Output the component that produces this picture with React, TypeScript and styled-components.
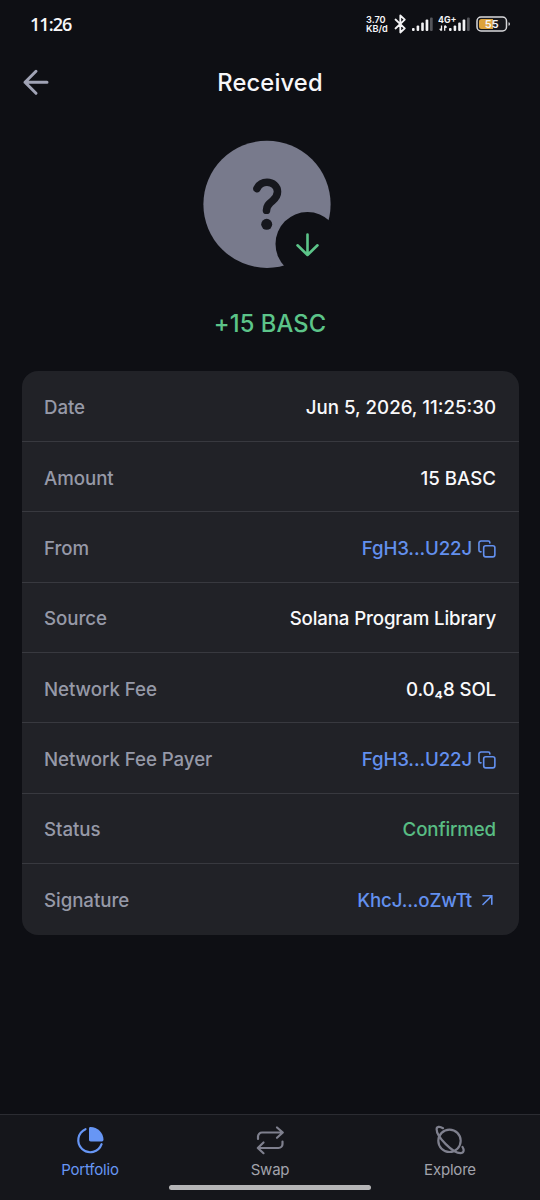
import React from 'react';
import styled, { createGlobalStyle } from 'styled-components';

const Global = createGlobalStyle`
  *, *::before, *::after { box-sizing: border-box; }
  body { margin: 0; background: #0e0f14; }
`;

const Screen = styled.div`
  width: 540px;
  height: 1200px;
  display: flex;
  flex-direction: column;
  overflow: hidden;
  background: #0e0f14;
  color: #f7f7fa;
  font-family: Inter, 'Liberation Sans', sans-serif;
  svg { display: block; flex: none; }
`;

const StatusBar = styled.header`
  height: 48px;
  flex: none;
  display: flex;
  align-items: center;
  justify-content: space-between;
  padding: 0 29px 0 30px;
`;

const Clock = styled.time`
  font-family: 'Open Sans', sans-serif;
  font-size: 18px;
  font-weight: 600;
  letter-spacing: -0.95px;
  line-height: 24px;
`;

const StatusIcons = styled.div`
  display: flex;
  align-items: center;
  height: 24px;
`;

const Speed = styled.div`
  display: flex;
  flex-direction: column;
  gap: 1px;
  width: 24px;
  margin-right: 4px;
  white-space: nowrap;
  font-size: 9.2px;
  font-weight: 600;
  line-height: 8px;
`;

const SpeedLine = styled.span`
  display: block;
  height: 8px;
`;

const CellSignal = styled.div`
  margin-left: 5px;
`;

const NetworkLabel = styled.text`
  font: 700 8.8px Inter, sans-serif;
`;

const BatteryLabel = styled.text`
  font: 600 11px Inter, sans-serif;
`;

const TitleBar = styled.div`
  height: 70px;
  flex: none;
  display: grid;
  grid-template-columns: 48px 1fr 48px;
  align-items: center;
  padding: 0 22px;
`;

const BackButton = styled.button`
  border: 0;
  padding: 0;
  background: none;
  color: #a0a3b5;
`;

const Title = styled.h1`
  margin: 0;
  text-align: center;
  font-size: 23.7px;
  font-weight: 500;
  letter-spacing: 0.15px;
  line-height: 30px;
`;

const TokenSummary = styled.section`
  display: flex;
  flex-direction: column;
  align-items: center;
  height: 253px;
  flex: none;
  padding-top: 22px;
`;

const TokenAmount = styled.p`
  margin: 41px 0 0;
  color: #5cc489;
  font-size: 23.7px;
  font-weight: 500;
  letter-spacing: 0.1px;
  line-height: 30px;
`;

const Details = styled.dl`
  margin: 0 21.5px;
  flex: none;
  height: 564px;
  display: grid;
  grid-template-rows: 71px repeat(6, 70.35px) 1fr;
  border-radius: 16px;
  background: #212227;
`;

const DetailRow = styled.div`
  display: flex;
  align-items: center;
  justify-content: space-between;
  padding: 4px 22.5px 0;
  border-bottom: 1.5px solid #38393f;
  font-size: 18.7px;
  font-weight: 500;
  line-height: 28px;
  &:last-child { border-bottom: 0; padding-top: 2px; }
`;

const Label = styled.dt`
  color: #9699a7;
  letter-spacing: -0.06px;
`;

type Tone = 'plain' | 'link' | 'good';
const tones: Record<Tone, string> = { plain: '#f9f9fb', link: '#6390ee', good: '#58bd83' };

const Value = styled.dd<{ $tone: Tone; $figures?: boolean }>`
  margin: 0;
  display: flex;
  align-items: center;
  letter-spacing: ${(p) => (p.$figures ? '0' : '-0.14px')};
  color: ${(p) => tones[p.$tone]};
`;

const CopySlot = styled.span`
  margin-left: 6px;
  padding-bottom: 1px;
`;

const LinkSlot = styled.span`
  margin: 0 3px 0 10px;
  padding-bottom: 2px;
`;

const Spacer = styled.div`
  flex: 1;
`;

const BottomNav = styled.nav`
  height: 86px;
  flex: none;
  display: flex;
  flex-direction: column;
  align-items: center;
  border-top: 1.5px solid #2b2c32;
  background: #15161b;
`;

const Tabs = styled.div`
  align-self: stretch;
  height: 70px;
  flex: none;
  display: grid;
  grid-template-columns: repeat(3, 1fr);
`;

const Tab = styled.div<{ $active?: boolean }>`
  display: flex;
  flex-direction: column;
  align-items: center;
  padding-top: 10px;
  color: ${(p) => (p.$active ? '#6796f5' : '#7f808e')};
`;

const TabLabel = styled.span<{ $active?: boolean }>`
  margin-top: 5px;
  color: ${(p) => (p.$active ? '#6796f5' : '#a2a3ac')};
  font-size: 15px;
  letter-spacing: -0.2px;
  line-height: 20px;
`;

const HomeIndicator = styled.div`
  width: 202px;
  height: 5px;
  border-radius: 3px;
  background: #b5b5b7;
`;

const SignalIcon = ({ label }: { label?: string }) => (
  <svg width={label ? 33 : 21} height="20" viewBox={label ? '-11 0 33 20' : '0 0 21 20'} fill="#f3f3f5">
    <rect x="0" y="14" width="2.6" height="3" rx="1" />
    <rect x="4.6" y="11.5" width="2.6" height="5.5" rx="1" />
    <rect x="9.2" y="8.5" width="2.6" height="8.5" rx="1" />
    <rect x="13.6" y="5.5" width="2.7" height="11.5" rx="1" />
    <rect x="18" y="3.5" width="2.7" height="13.5" rx="1" fill="#55565b" />
    {label && (
      <>
        <NetworkLabel x="-11" y="9">{label}</NetworkLabel>
        <path d="M-7.500 11.500v5M-9.300 14.800l1.800 1.900M-4.300 16.700v-5M-4.300 11.500l1.900 2" fill="none" stroke="#f3f3f5" strokeWidth="1.300" />
      </>
    )}
  </svg>
);

const BluetoothIcon = () => (
  <svg width="13" height="20" viewBox="0 0 13 20" fill="none" stroke="#f3f3f5" strokeWidth="1.8" strokeLinejoin="round" strokeLinecap="round">
    <path d="M1.500 5.500l9.300 8.800L6.300 18.500v-17l4.500 4.200-9.300 8.800" />
  </svg>
);

const BatteryIcon = () => (
  <svg width="35" height="16" viewBox="0 0 35 16">
    <rect x="1" y="1" width="29.5" height="14" rx="4" fill="#17181d" stroke="#d9d9dc" strokeWidth="1.5" />
    <path d="M5.500 3H17v10H5.500a2.500 2.500 0 0 1-2.500-2.500v-5A2.500 2.500 0 0 1 5.500 3z" fill="#dda23c" />
    <path d="M32.500 6.200q1.500 0 1.500 1.800t-1.500 1.800z" fill="#d9d9dc" />
    <BatteryLabel x="15.700" y="12" textAnchor="middle" fill="#f5f5f6">55</BatteryLabel>
  </svg>
);

const TokenDrawing = styled.svg`
  margin-right: 6px;
`;

const TokenIcon = () => (
  <TokenDrawing width="128" height="128" viewBox="0 0 128 128">
    <circle cx="64" cy="64.300" r="63.600" fill="#787a8c" />
    <path d="M54 48.500C56 44.500 59.500 42.300 64 42.300c6 0 10.500 4 10.500 9.500 0 4-2 6.500-5 9-4 3.200-5.900 5.200-6 9.500" fill="none" stroke="#16171d" strokeWidth="7.600" strokeLinecap="round" strokeLinejoin="round" />
    <circle cx="63.700" cy="84.300" r="5.500" fill="#16171d" />
    <circle cx="104.500" cy="104" r="32" fill="#0e0f14" />
    <path d="M104.500 94.500v20M94.500 105.300l10 9.700 10-9.700" fill="none" stroke="#5cc489" strokeWidth="2.600" strokeLinecap="round" strokeLinejoin="round" />
  </TokenDrawing>
);

const BackIcon = () => (
  <svg width="28" height="28" viewBox="0 0 28 28" fill="none" stroke="currentColor" strokeWidth="3" strokeLinecap="round" strokeLinejoin="round">
    <path d="M25 13.300H3M14 2.300l-11 11 11 11" />
  </svg>
);

const CopyIcon = () => (
  <svg width="18" height="18" viewBox="0 0 19 19" fill="none" stroke="currentColor" strokeWidth="1.700" strokeLinecap="round" strokeLinejoin="round">
    <rect x="6" y="6" width="11.800" height="11.800" rx="2.200" />
    <path d="M3.200 12.500h-.5A1.700 1.700 0 0 1 1 10.800V3.200A2.200 2.200 0 0 1 3.200 1h7.600a1.700 1.700 0 0 1 1.700 1.700v.5" />
  </svg>
);

const ExternalIcon = () => (
  <svg width="11" height="12" viewBox="0 0 11 12" fill="none" stroke="currentColor" strokeWidth="1.600" strokeLinecap="round">
    <path d="M1 1.800h8.800v8.400M9.500 2.100L1 10.500" />
  </svg>
);

const PortfolioIcon = () => (
  <svg width="30" height="30" viewBox="0 0 30 30" fill="none" stroke="currentColor" strokeWidth="2.200" strokeLinecap="round">
    <path d="M10.500 4.200A12 12 0 1 0 26.600 19.200" />
    <path d="M15.500 2C22.500 2 28.500 8 28.500 14.600c0 1.200-.5 1.800-1.600 1.800H15.700c-1.100 0-1.700-.6-1.700-1.700V3.500c0-1 .5-1.500 1.500-1.500z" fill="currentColor" stroke="none" />
  </svg>
);

const SwapIcon = () => (
  <svg width="30" height="30" viewBox="0 0 30 30" fill="none" stroke="currentColor" strokeWidth="2.200" strokeLinecap="round" strokeLinejoin="round">
    <path d="M3 14v-2.500a4 4 0 0 1 4-4h20.500M22 2.500l5.800 5-5.800 5.300" />
    <path d="M27.500 16.500V19a4 4 0 0 1-4 4H3M8.500 17.500L2.800 23l5.700 5.200" />
  </svg>
);

const ExploreIcon = () => (
  <svg width="30" height="30" viewBox="0 0 30 30" fill="none" stroke="currentColor" strokeWidth="2.200" strokeLinecap="round" strokeLinejoin="round">
    <circle cx="14.500" cy="15.800" r="11.200" />
    <path d="M8 3.200C4.500 1 1.600 1.500 1.600 4.200 1.600 12 18 28.200 25.500 28.200c3.300 0 4-3 2-6.200" />
  </svg>
);

const rows: { label: string; value: string; tone?: Tone; figures?: boolean; icon?: 'copy' | 'external' }[] = [
  { label: 'Date', value: 'Jun 5, 2026, 11:25:30', figures: true },
  { label: 'Amount', value: '15 BASC', figures: true },
  { label: 'From', value: 'FgH3...U22J', tone: 'link', icon: 'copy' },
  { label: 'Source', value: 'Solana Program Library' },
  { label: 'Network Fee', value: '0.0₄8 SOL' },
  { label: 'Network Fee Payer', value: 'FgH3...U22J', tone: 'link', icon: 'copy' },
  { label: 'Status', value: 'Confirmed', tone: 'good' },
  { label: 'Signature', value: 'KhcJ...oZwTt', tone: 'link', icon: 'external' },
];

export default function App() {
  return (
    <Screen>
      <Global />
      <StatusBar>
        <Clock>11:26</Clock>
        <StatusIcons>
          <Speed>
            <SpeedLine>3.70</SpeedLine>
            <SpeedLine>KB/d</SpeedLine>
          </Speed>
          <BluetoothIcon />
          <CellSignal><SignalIcon /></CellSignal>
          <CellSignal><SignalIcon label="4G+" /></CellSignal>
          <CellSignal><BatteryIcon /></CellSignal>
        </StatusIcons>
      </StatusBar>
      <TitleBar>
        <BackButton aria-label="Back"><BackIcon /></BackButton>
        <Title>Received</Title>
      </TitleBar>
      <TokenSummary>
        <TokenIcon />
        <TokenAmount>+15 BASC</TokenAmount>
      </TokenSummary>
      <Details>
        {rows.map((row) => (
          <DetailRow key={row.label}>
            <Label>{row.label}</Label>
            <Value $tone={row.tone ?? 'plain'} $figures={row.figures}>
              {row.value}
              {row.icon === 'copy' && <CopySlot><CopyIcon /></CopySlot>}
              {row.icon === 'external' && <LinkSlot><ExternalIcon /></LinkSlot>}
            </Value>
          </DetailRow>
        ))}
      </Details>
      <Spacer />
      <BottomNav>
        <Tabs>
          <Tab $active><PortfolioIcon /><TabLabel $active>Portfolio</TabLabel></Tab>
          <Tab><SwapIcon /><TabLabel>Swap</TabLabel></Tab>
          <Tab><ExploreIcon /><TabLabel>Explore</TabLabel></Tab>
        </Tabs>
        <HomeIndicator />
      </BottomNav>
    </Screen>
  );
}
